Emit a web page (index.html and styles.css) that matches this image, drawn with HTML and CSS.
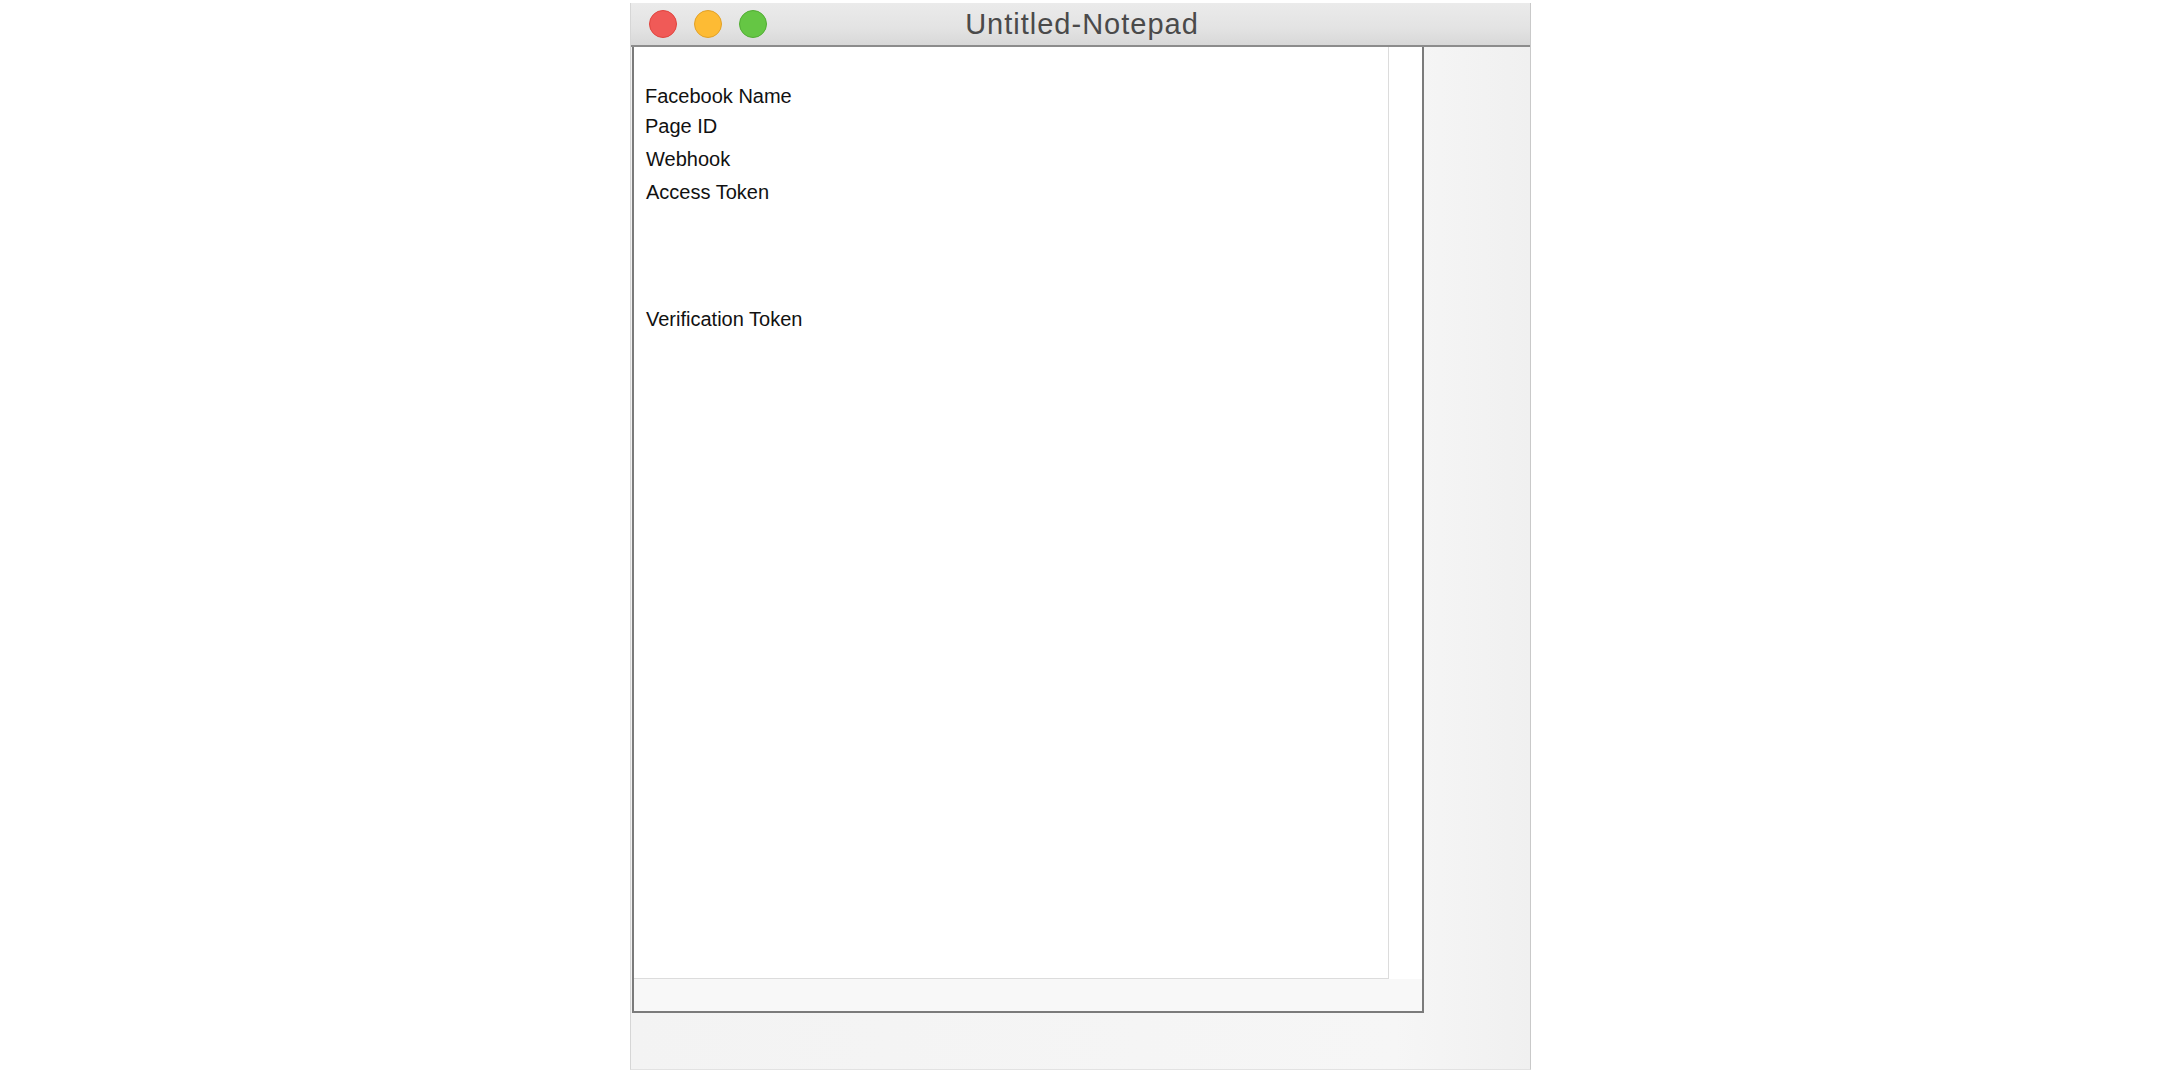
FILE: index.html
```html
<!DOCTYPE html>
<html lang="en">
<head>
    <meta charset="UTF-8">
    <meta name="viewport" content="width=device-width, initial-scale=1.0">
    <title>Untitled-Notepad</title>
    <link rel="stylesheet" href="styles.css">
</head>
<body>
    <div class="window">
        <div class="titlebar">
            <div class="lights">
                <span class="light red"></span>
                <span class="light yellow"></span>
                <span class="light green"></span>
            </div>
            <div class="title">Untitled-Notepad</div>
            <div></div>
        </div>
        <div class="frame">
            <div class="sheet">
                <div class="page">
                    <div class="field">Facebook Name</div>
                    <div class="field">Page ID</div>
                    <div class="field gap indent">Webhook</div>
                    <div class="field gap indent">Access Token</div>
                    <div class="field far indent">Verification Token</div>
                </div>
            </div>
        </div>
    </div>
</body>
</html>
```

FILE: styles.css
```css
:root {
    --color-text: #111;
    --color-title: #4a4a4a;
    --color-edge: #7b7b7b;
}

body {
    margin: 0;
    background: #fff;
    font-family: 'Liberation Sans', Arial, sans-serif;
    height: 1071px;
    overflow: hidden;
}

.window {
    box-sizing: border-box;
    width: 901px;
    height: 1067px;
    margin: 3px 0 0 630px;
    border-left: 1px solid #d6d6d6;
    border-right: 1px solid #c9c9c9;
    border-bottom: 1px solid #e2e2e2;
    display: flex;
    flex-direction: column;
}

.titlebar {
    height: 42px;
    flex-shrink: 0;
    background: linear-gradient(to bottom, #ebebeb 0%, #e3e3e3 60%, #d8d8d8 100%);
    border-bottom: 2px solid #8c8c8c;
    display: grid;
    grid-template-columns: 1fr auto 1fr;
    align-items: center;
}

.lights {
    display: flex;
    align-items: center;
    gap: 17px;
    padding-left: 18px;
}

.light {
    box-sizing: border-box;
    width: 28px;
    height: 28px;
    border-radius: 50%;
}

.red {
    background: #f05a57;
    border: 1px solid #e0443e;
}

.yellow {
    background: #fdbb34;
    border: 1px solid #e2a127;
}

.green {
    background: #65c644;
    border: 1px solid #51ad33;
}

.title {
    font-size: 29px;
    letter-spacing: 1px;
    color: var(--color-title);
    line-height: 42px;
    padding-left: 3px;
}

.frame {
    flex: 1;
    padding: 0 106px 56px 1px;
    background: linear-gradient(to right, #f3f3f3 0%, #f6f6f6 85%, #f0f0f0 100%);
}

.sheet {
    box-sizing: border-box;
    width: 792px;
    height: 966px;
    border: 2px solid var(--color-edge);
    border-top: none;
    background: linear-gradient(to bottom, #fff 0, #fff 932px, #f8f8f8 932px);
}

.page {
    box-sizing: border-box;
    width: 755px;
    height: 932px;
    padding: 34px 0 0 11px;
    border-right: 1px solid #dcdcdc;
    border-bottom: 1px solid #dcdcdc;
    background: #fff;
}

.field {
    font-size: 20px;
    line-height: 30px;
    color: var(--color-text);
}

.gap {
    margin-top: 3px;
}

.far {
    margin-top: 97px;
}

.indent {
    padding-left: 1px;
}
```
